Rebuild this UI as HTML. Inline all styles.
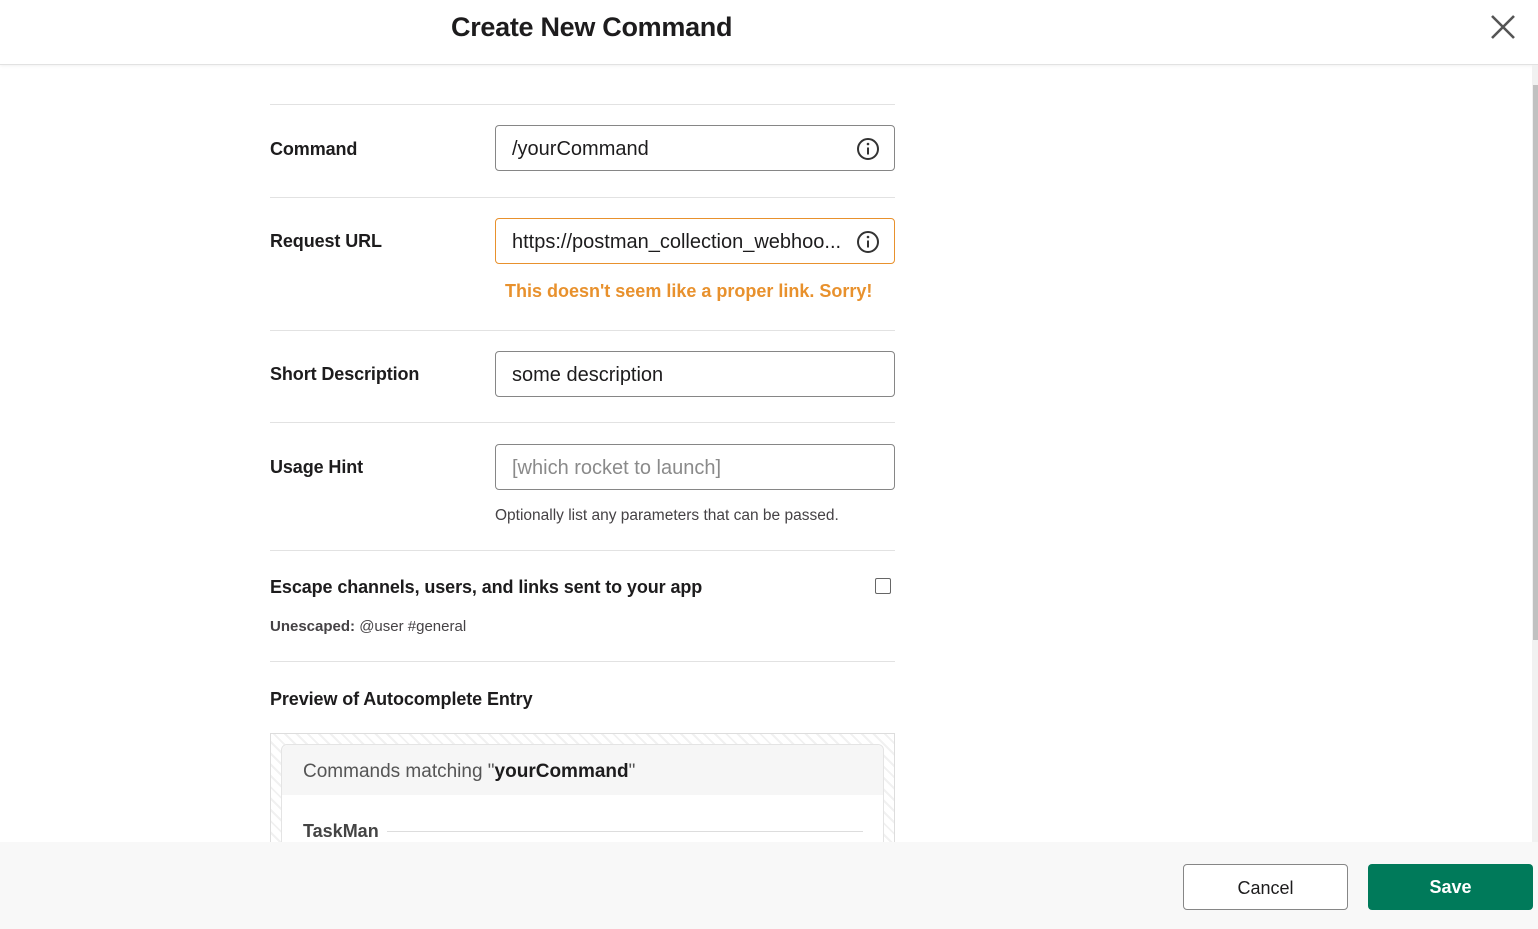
<!DOCTYPE html>
<html><head><style>
body{margin:0;width:1538px;height:929px;overflow:hidden;font-family:"Liberation Sans",sans-serif;color:#1d1c1d;background:#fff;position:relative}
.hdr{position:absolute;left:0;top:0;width:1538px;height:64px;border-bottom:1px solid #e2e2e2;box-shadow:0 1px 3px rgba(0,0,0,.06);background:#fff}
.hdr h1{position:absolute;left:451px;top:12px;margin:0;font-size:27px;font-weight:bold;letter-spacing:-0.3px}
.x{position:absolute;left:1490px;top:14px}
.sb{position:absolute;left:1532px;top:65px;width:6px;height:777px;background:#f1f1f1}
.sb div{position:absolute;left:1px;top:20px;width:5px;height:555px;background:#c1c1c1}
.hr{position:absolute;left:270px;width:625px;height:1px;background:#e2e2e2}
.lbl{position:absolute;left:270px;font-size:18px;font-weight:bold;letter-spacing:-0.1px}
.inp{position:absolute;left:495px;border:1px solid #868686;border-radius:4px;font-size:20px;line-height:46px;padding-left:16px;box-sizing:border-box;width:400px;height:46px}
.info{position:absolute;right:14px;top:11px}
.err{position:absolute;left:505px;top:281px;color:#e8912d;font-size:18px;font-weight:bold}
.foot{position:absolute;left:0;top:842px;width:1538px;height:87px;background:#f8f8f8}
.btn{position:absolute;top:864px;width:165px;height:46px;border-radius:4px;box-sizing:border-box;text-align:center;line-height:46px;font-size:18px;font-weight:bold}
</style></head><body>
<div class="hdr"><h1>Create New Command</h1>
<svg class="x" width="26" height="26" viewBox="0 0 26 26"><path d="M2 2L24 24M24 2L2 24" stroke="#555" stroke-width="2.6"/></svg></div>
<div class="sb"><div></div></div>
<div class="hr" style="top:104px"></div>
<div class="lbl" style="top:139px">Command</div>
<div class="inp" style="top:125px">/yourCommand<svg class="info" width="24" height="24" viewBox="0 0 24 24"><circle cx="12" cy="12" r="10" fill="none" stroke="#333" stroke-width="2"/><path d="M12 10.5v7" stroke="#333" stroke-width="2"/><circle cx="12" cy="7" r="1.3" fill="#333"/></svg></div>
<div class="hr" style="top:197px"></div>
<div class="lbl" style="top:231px">Request URL</div>
<div class="inp" style="top:218px;border-color:#e8912d">https://postman_collection_webhoo...<svg class="info" width="24" height="24" viewBox="0 0 24 24"><circle cx="12" cy="12" r="10" fill="none" stroke="#333" stroke-width="2"/><path d="M12 10.5v7" stroke="#333" stroke-width="2"/><circle cx="12" cy="7" r="1.3" fill="#333"/></svg></div>
<div class="err">This doesn't seem like a proper link. Sorry!</div>
<div class="hr" style="top:330px"></div>
<div class="lbl" style="top:364px">Short Description</div>
<div class="inp" style="top:351px">some description</div>
<div class="hr" style="top:422px"></div>
<div class="lbl" style="top:457px">Usage Hint</div>
<div class="inp" style="top:444px;color:#8a8a8a">[which rocket to launch]</div>
<div style="position:absolute;left:495px;top:507px;font-size:15.5px;color:#454245">Optionally list any parameters that can be passed.</div>
<div class="hr" style="top:550px"></div>
<div class="lbl" style="top:577px">Escape channels, users, and links sent to your app</div>
<div style="position:absolute;left:875px;top:578px;width:14px;height:14px;border:1px solid #666;border-radius:2px"></div>
<div style="position:absolute;left:270px;top:618px;font-size:15px;color:#454245"><b>Unescaped:</b> @user #general</div>
<div class="hr" style="top:661px"></div>
<div class="lbl" style="top:689px">Preview of Autocomplete Entry</div>
<div style="position:absolute;left:270px;top:733px;width:623px;height:120px;border:1px solid #ddd;background:repeating-linear-gradient(45deg,#fff 0 6px,#f1f1f1 6px 8px)"></div>
<div style="position:absolute;left:281px;top:744px;width:601px;height:110px;border:1px solid #e4e4e4;border-radius:6px;background:#fff">
<div style="height:50px;background:#f6f6f6;border-radius:6px 6px 0 0;font-size:19px;color:#555;line-height:54px;padding-left:21px">Commands matching "<b style="color:#1d1c1d">yourCommand</b>"</div>
<div style="position:absolute;left:21px;top:76px;font-size:18px;font-weight:bold;color:#444">TaskMan</div>
<div style="position:absolute;left:105px;top:86px;width:476px;height:1px;background:#ddd"></div>
</div>
<div class="foot"></div>
<div class="btn" style="left:1183px;border:1px solid #868686;background:#fff;color:#1d1c1d;font-weight:normal">Cancel</div>
<div class="btn" style="left:1368px;background:#007a5a;color:#fff">Save</div>
</body></html>
